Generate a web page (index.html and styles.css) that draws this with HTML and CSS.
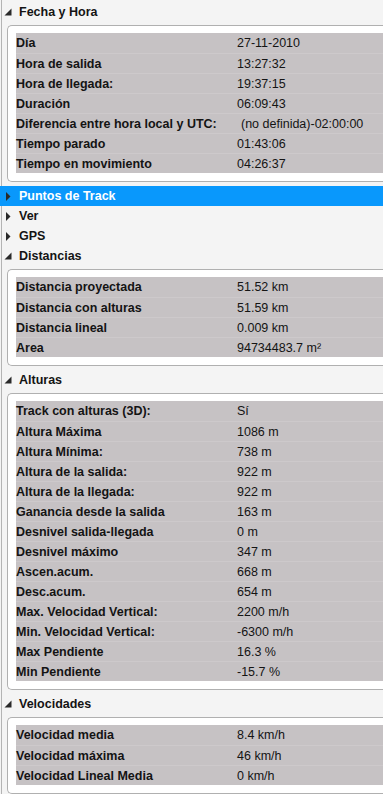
FILE: index.html
```html
<!DOCTYPE html>
<html lang="es">
<head>
    <meta charset="UTF-8">
    <title>Propiedades del track</title>
    <link rel="stylesheet" href="styles.css">
</head>
<body>
    <div class="page">
        <!-- Fecha y Hora -->
        <div class="group-head">
            <svg class="arrow" width="8" height="8" viewBox="0 0 8 8"><polygon points="7.5,0.5 7.5,7.5 0.5,7.5" fill="#2a2a2a"/></svg>
            <span>Fecha y Hora</span>
        </div>
        <div class="panel">
            <table class="props">
                <tr><td>Día</td><td>27-11-2010</td></tr>
                <tr><td>Hora de salida</td><td>13:27:32</td></tr>
                <tr><td>Hora de llegada:</td><td>19:37:15</td></tr>
                <tr><td>Duración</td><td>06:09:43</td></tr>
                <tr><td>Diferencia entre hora local y UTC:</td><td class="shift">(no definida)-02:00:00</td></tr>
                <tr><td>Tiempo parado</td><td>01:43:06</td></tr>
                <tr><td>Tiempo en movimiento</td><td>04:26:37</td></tr>
            </table>
        </div>

        <div class="group-head selected">
            <svg class="arrow" width="8" height="9" viewBox="0 0 8 9"><polygon points="2,0 6.5,4.5 2,9" fill="#2a2a2a"/></svg>
            <span>Puntos de Track</span>
        </div>
        <div class="group-head">
            <svg class="arrow" width="8" height="9" viewBox="0 0 8 9"><polygon points="2,0 6.5,4.5 2,9" fill="#2a2a2a"/></svg>
            <span>Ver</span>
        </div>
        <div class="group-head">
            <svg class="arrow" width="8" height="9" viewBox="0 0 8 9"><polygon points="2,0 6.5,4.5 2,9" fill="#2a2a2a"/></svg>
            <span>GPS</span>
        </div>

        <!-- Distancias -->
        <div class="group-head">
            <svg class="arrow" width="8" height="8" viewBox="0 0 8 8"><polygon points="7.5,0.5 7.5,7.5 0.5,7.5" fill="#2a2a2a"/></svg>
            <span>Distancias</span>
        </div>
        <div class="panel">
            <table class="props">
                <tr><td>Distancia proyectada</td><td>51.52 km</td></tr>
                <tr><td>Distancia con alturas</td><td>51.59 km</td></tr>
                <tr><td>Distancia lineal</td><td>0.009 km</td></tr>
                <tr><td>Area</td><td>94734483.7 m²</td></tr>
            </table>
        </div>

        <!-- Alturas -->
        <div class="group-head">
            <svg class="arrow" width="8" height="8" viewBox="0 0 8 8"><polygon points="7.5,0.5 7.5,7.5 0.5,7.5" fill="#2a2a2a"/></svg>
            <span>Alturas</span>
        </div>
        <div class="panel">
            <table class="props">
                <tr><td>Track con alturas (3D):</td><td>Sí</td></tr>
                <tr><td>Altura Máxima</td><td>1086 m</td></tr>
                <tr><td>Altura Mínima:</td><td>738 m</td></tr>
                <tr><td>Altura de la salida:</td><td>922 m</td></tr>
                <tr><td>Altura de la llegada:</td><td>922 m</td></tr>
                <tr><td>Ganancia desde la salida</td><td>163 m</td></tr>
                <tr><td>Desnivel salida-llegada</td><td>0 m</td></tr>
                <tr><td>Desnivel máximo</td><td>347 m</td></tr>
                <tr><td>Ascen.acum.</td><td>668 m</td></tr>
                <tr><td>Desc.acum.</td><td>654 m</td></tr>
                <tr><td>Max. Velocidad Vertical:</td><td>2200 m/h</td></tr>
                <tr><td>Min. Velocidad Vertical:</td><td>-6300 m/h</td></tr>
                <tr><td>Max Pendiente</td><td>16.3 %</td></tr>
                <tr><td>Min Pendiente</td><td>-15.7 %</td></tr>
            </table>
        </div>

        <!-- Velocidades -->
        <div class="group-head">
            <svg class="arrow" width="8" height="8" viewBox="0 0 8 8"><polygon points="7.5,0.5 7.5,7.5 0.5,7.5" fill="#2a2a2a"/></svg>
            <span>Velocidades</span>
        </div>
        <div class="panel">
            <table class="props">
                <tr><td>Velocidad media</td><td>8.4 km/h</td></tr>
                <tr><td>Velocidad máxima</td><td>46 km/h</td></tr>
                <tr><td>Velocidad Lineal Media</td><td>0 km/h</td></tr>
            </table>
        </div>
    </div>
</body>
</html>
```

FILE: styles.css
```css
body {
    margin: 0;
    background-color: #f4f4f4;
    font-family: "Liberation Sans", Arial, sans-serif;
    font-size: 12.5px;
    color: #141414;
    overflow: hidden;
}

.page {
    margin-left: 1px;
    padding-top: 2px;
    border-left: 1px solid #b4b4b4;
    min-height: 792px;
}

.group-head {
    height: 20px;
    display: flex;
    align-items: center;
    font-weight: bold;
}

.group-head .arrow {
    margin-left: 2px;
    margin-right: 7px;
    flex-shrink: 0;
}

.group-head.selected {
    background-color: #0998fc;
    color: white;
    margin-left: -2px;
    padding-left: 2px;
}

.panel {
    margin: 3px 0 4px 5px;
    padding: 7px 0 8px 8px;
    background-color: white;
    border: 1px solid #b0b0b0;
    border-right: none;
    border-radius: 5px 0 0 5px;
}

.props {
    width: 100%;
    border-collapse: collapse;
    background-color: #c6c2c4;
}

.props td {
    height: 20px;
    padding: 1px 0 0 0;
    box-sizing: border-box;
    border-bottom: 1px solid #cdc9cb;
    white-space: nowrap;
}

.props tr:last-child td {
    border-bottom: none;
}

.props td:first-child {
    width: 221px;
    font-weight: bold;
}

.props td.shift {
    padding-left: 4px;
}
```
